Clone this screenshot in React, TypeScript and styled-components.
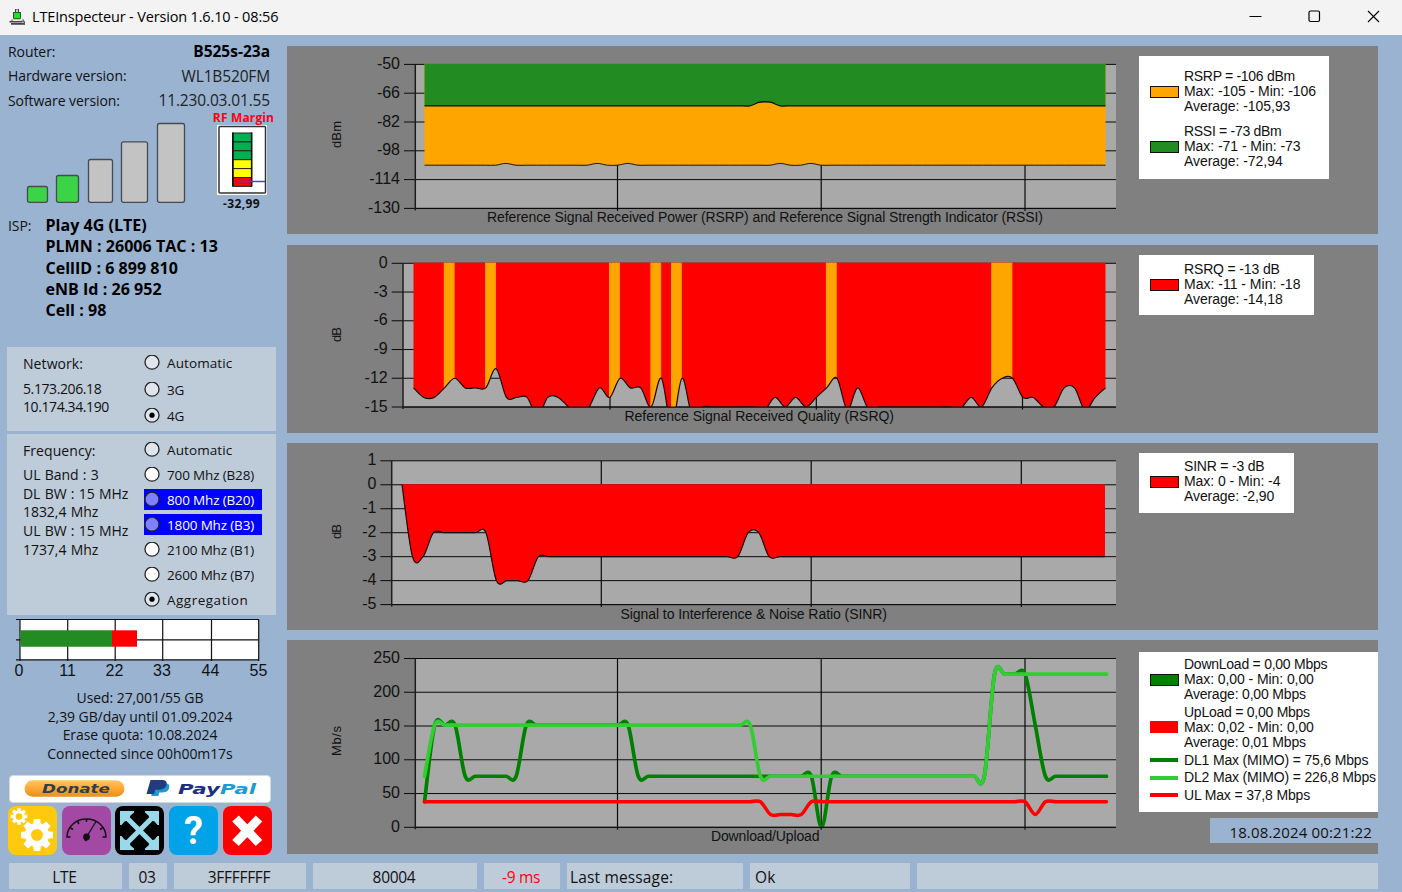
import { ReactNode } from "react";
import styled, { createGlobalStyle } from "styled-components";

const uiFont = `"Open Sans", "Noto Sans", sans-serif`;
const chartFont = `"Liberation Sans", Arial, sans-serif`;

const GlobalStyle = createGlobalStyle`
  body {
    margin: 0;
    background: #99b3d1;
    overflow: hidden;
  }
  svg {
    display: block;
    flex: none;
  }
`;

const Window = styled.div`
  width: 1402px;
  height: 892px;
  display: flex;
  flex-direction: column;
  background: #99b3d1;
  color: #111;
  font-family: ${uiFont};
  white-space: pre;
`;

const TitleBar = styled.header`
  height: 35px;
  flex: none;
  box-sizing: border-box;
  display: flex;
  align-items: center;
  padding: 0 22px 3px 9px;
  background: #f3f3f3;
  color: #000;
`;

const Title = styled.span`
  flex: 1;
  margin-left: 7px;
  font-size: 14.5px;
  letter-spacing: -0.16px;
`;

const WindowButtons = styled.div`
  display: flex;
  gap: 46px;
`;

const Main = styled.main`
  display: flex;
  height: 828px;
  flex: none;
`;

const Sidebar = styled.aside`
  width: 287px;
  flex: none;
  display: flex;
  flex-direction: column;
`;

const InfoList = styled.div`
  display: grid;
  grid-template-rows: 24px 25px 24px;
  align-items: center;
  padding: 4px 17px 0 8px;
`;

const InfoRow = styled.div`
  display: flex;
  justify-content: space-between;
  align-items: center;
`;

const InfoLabel = styled.span`
  font-size: 14px;
  letter-spacing: -0.07px;
`;

const InfoValue = styled.span<{ $bold?: boolean }>`
  font-size: 15.5px;
  font-weight: ${(p) => (p.$bold ? 700 : 400)};
  letter-spacing: ${(p) => (p.$bold ? 0 : -0.15)}px;
  color: ${(p) => (p.$bold ? "#000" : "#222")};
`;

const SignalRow = styled.div`
  height: 103px;
  display: flex;
`;

const MarginColumn = styled.div`
  display: flex;
  flex-direction: column;
  align-items: center;
  width: 64px;
  margin-left: 7.5px;
`;

const MarginTitle = styled.div`
  height: 13px;
  padding-left: 4px;
  line-height: 11px;
  font-size: 12px;
  font-weight: 700;
  letter-spacing: 0.15px;
  color: #ff0010;
`;

const MarginValue = styled.div`
  font-size: 12px;
  line-height: 18px;
  font-weight: 700;
  letter-spacing: 0.4px;
`;

const Isp = styled.div`
  display: flex;
  height: 132px;
  padding-left: 8px;
  line-height: 21.3px;
`;

const IspDetails = styled.div`
  margin-left: 14px;
  font-size: 16px;
  font-weight: 700;
  letter-spacing: 0.04px;
  color: #000;
`;

const Group = styled.section<{ $height: number }>`
  box-sizing: border-box;
  width: 269px;
  height: ${(p) => p.$height}px;
  margin: 0 0 3px 7px;
  padding-left: 16px;
  display: flex;
  background: #becbd9;
`;

const GroupInfo = styled.div<{ $wide?: boolean }>`
  width: 121px;
  padding-top: 8px;
  font-size: 14px;
  line-height: 18.7px;
  letter-spacing: ${(p) => (p.$wide ? -0.05 : -0.4)}px;
  word-spacing: ${(p) => (p.$wide ? 0.7 : 0)}px;
`;

const GroupTitle = styled.div<{ $gap?: number }>`
  margin-bottom: ${(p) => p.$gap ?? 6}px;
  letter-spacing: 0.08px;
`;

const Options = styled.div<{ $rowHeight: number }>`
  display: grid;
  grid-auto-rows: ${(p) => p.$rowHeight}px;
  align-content: start;
  align-items: center;
  padding-top: 3px;
`;

const Option = styled.div<{ $active?: boolean; $spacing?: number }>`
  display: flex;
  align-items: center;
  width: 118px;
  height: 21px;
  font-size: 13.5px;
  letter-spacing: ${(p) => p.$spacing ?? -0.15}px;
  color: ${(p) => (p.$active ? "#fff" : "#111")};
  background: ${(p) => (p.$active ? "#0000ff" : "transparent")};

  span {
    padding-left: 7px;
  }
`;

const Usage = styled.div`
  height: 86px;
  padding-right: 7px;
  margin-top: 6px;
  text-align: center;
  font-size: 14px;
  line-height: 18.7px;
  letter-spacing: -0.08px;
`;

const DonateButton = styled.div`
  box-sizing: border-box;
  width: 262px;
  height: 28px;
  margin: 0 0 3px 9px;
  border: 1px solid #d5d8de;
  border-radius: 4px;
  background: #fff;
`;

const Tools = styled.div`
  display: flex;
  gap: 4.7px;
  padding-left: 8px;
`;

const Tool = styled.div<{ $color: string }>`
  width: 49px;
  height: 49px;
  border-radius: 8px;
  background: ${(p) => p.$color};
`;

const Charts = styled.div`
  width: 1091px;
  display: flex;
  flex-direction: column;
  padding-top: 11px;
`;

const ChartPanel = styled.section<{ $height: number; $gap: number }>`
  height: ${(p) => p.$height}px;
  margin-bottom: ${(p) => p.$gap}px;
  flex: none;
  display: flex;
  background: #808080;
`;

const ChartSide = styled.div`
  flex: 1;
  display: flex;
  flex-direction: column;
  align-items: flex-start;
`;

const Legend = styled.div<{ $width: number; $height: number; $top: number; $pad: number }>`
  box-sizing: border-box;
  width: ${(p) => p.$width}px;
  height: ${(p) => p.$height}px;
  margin-top: ${(p) => p.$top}px;
  padding: ${(p) => p.$pad}px 0 0 11px;
  background: #fff;
`;

const LegendEntry = styled.div<{ $gap?: number }>`
  display: flex;
  align-items: center;
  margin-bottom: ${(p) => p.$gap ?? 0}px;
  font-family: ${chartFont};
  font-size: 14px;
  line-height: 15px;
`;

const Swatch = styled.div<{ $color: string; $height?: number; $border?: boolean }>`
  box-sizing: border-box;
  width: ${(p) => (p.$border ? 29 : 28)}px;
  height: ${(p) => p.$height ?? 12}px;
  margin-right: ${(p) => (p.$border ? 5 : 6)}px;
  border: ${(p) => (p.$border ? "1px solid #111" : "none")};
  background: ${(p) => p.$color};
`;

const LegendLine = styled.div<{ $spacing?: number }>`
  letter-spacing: ${(p) => p.$spacing ?? -0.3}px;
`;

const Clock = styled.div`
  align-self: flex-end;
  box-sizing: border-box;
  width: 168px;
  height: 25px;
  margin-top: 6px;
  padding-right: 6px;
  text-align: right;
  line-height: 28px;
  font-size: 15px;
  letter-spacing: 0.15px;
  background: #99b3d1;
`;

const StatusBar = styled.footer`
  display: flex;
  gap: 7px;
  padding-left: 9px;
`;

const StatusCell = styled.div<{ $width: number; $left?: number; $color?: string }>`
  box-sizing: border-box;
  width: ${(p) => p.$width}px;
  height: 26px;
  padding: ${(p) => (p.$left ? `0 0 0 ${p.$left}px` : "0 2px 0 0")};
  line-height: 28px;
  text-align: ${(p) => (p.$left ? "left" : "center")};
  font-size: 15.5px;
  letter-spacing: ${(p) => (p.$left ? 0.15 : -0.3)}px;
  color: ${(p) => p.$color ?? "#111"};
  background: #becbd9;
`;

type Point = [number, number];

// cardinal spline, tension 0.5
const spline = (pts: Point[]) =>
  pts.slice(1).reduce((d, p, i) => {
    const a = pts[i];
    const before = pts[i - 1] ?? a;
    const after = pts[i + 2] ?? p;
    const c1 = [a[0] + (p[0] - before[0]) / 6, a[1] + (p[1] - before[1]) / 6];
    const c2 = [p[0] - (after[0] - a[0]) / 6, p[1] - (after[1] - a[1]) / 6];
    return `${d}C${c1.join(" ")} ${c2.join(" ")} ${p.join(" ")}`;
  }, `M${pts[0].join(" ")}`);

const LAST = 67;

// expands [[index, value], ...] so that each value holds until the next index
const expand = (steps: Point[]) => {
  const out: number[] = [];
  steps.forEach(([from, value], i) => {
    const to = steps[i + 1]?.[0] ?? LAST + 1;
    for (let k = from; k < to; k++) out.push(value);
  });
  return out;
};

type Plot = {
  left: number;
  top: number;
  bottom: number;
  max: number;
  min: number;
  from: number;
  to: number;
};

const PLOT_RIGHT = 829;

const toPoints = (plot: Plot, values: number[]): Point[] =>
  values.map((v, i) => [
    plot.from + ((plot.to - plot.from) * i) / LAST,
    plot.top + ((plot.max - v) / (plot.max - plot.min)) * (plot.bottom - plot.top),
  ]);

type ChartProps = {
  id: string;
  height: number;
  plot: Plot;
  ticks: number[];
  columns: number[];
  unit: string;
  unitY: number;
  unitLength: number;
  caption: string;
  captionX: [number, number];
  captionY: number;
  children: ReactNode;
};

const Chart = (props: ChartProps) => {
  const { id, height, plot, ticks, columns, captionX, captionY } = props;
  const step = (plot.bottom - plot.top) / (ticks.length - 1);
  return (
    <svg width="852" height={height} fontFamily={chartFont} fill="#111">
      <defs>
        <clipPath id={id}>
          <rect
            x={plot.left}
            y={plot.top - 1}
            width={PLOT_RIGHT - plot.left}
            height={plot.bottom - plot.top + 1}
          />
        </clipPath>
      </defs>
      <rect
        x={plot.left}
        y={plot.top}
        width={PLOT_RIGHT - plot.left}
        height={plot.bottom - plot.top}
        fill="#a9a9a9"
      />
      {ticks.map((tick, i) => (
        <g key={tick}>
          <path d={`M${plot.left - 11} ${plot.top + i * step}H${PLOT_RIGHT}`} stroke="#0a0a0a" />
          <text x={plot.left - 15} y={plot.top + i * step + 4.6} fontSize="16" textAnchor="end">
            {tick}
          </text>
        </g>
      ))}
      {columns.map((x) => (
        <path key={x} d={`M${x} ${plot.top}V${plot.bottom + 2.5}`} stroke="#0a0a0a" strokeWidth="1.2" />
      ))}
      <g clipPath={`url(#${id})`}>{props.children}</g>
      <path d={`M${plot.left} ${plot.bottom}H${PLOT_RIGHT}`} stroke="#0a0a0a" />
      <path d={`M${plot.left + 0.3} ${plot.top}V${plot.bottom + 2}`} stroke="#1c1c1c" strokeWidth="1.5" />
      <text
        x={captionX[0]}
        y={captionY}
        fontSize="14"
        textLength={captionX[1] - captionX[0]}
      >
        {props.caption}
      </text>
      <text
        transform={`translate(54.4 ${props.unitY}) rotate(-90)`}
        fontSize="13"
        textLength={props.unitLength}
      >
        {props.unit}
      </text>
    </svg>
  );
};

const area = (pts: Point[], baseY: number) =>
  `${spline(pts)}L${pts[pts.length - 1][0]} ${baseY}L${pts[0][0]} ${baseY}Z`;

const powerPlot: Plot = { left: 128, top: 18.4, bottom: 162.4, max: -50, min: -130, from: 137.5, to: 818.5 };
const qualityPlot: Plot = { left: 115.7, top: 18.3, bottom: 162, max: 0, min: -15, from: 126.5, to: 818.5 };
const sinrPlot: Plot = { left: 104.4, top: 17.8, bottom: 161.6, max: 1, min: -5, from: 115, to: 818 };
const speedPlot: Plot = { left: 128, top: 18.5, bottom: 187.3, max: 250, min: 0, from: 137.5, to: 819.5 };

const rssi = toPoints(powerPlot, expand([[0, -73], [33, -71], [35, -73]]));
const rsrp = toPoints(
  powerPlot,
  expand([
    [0, -106], [8, -105], [9, -106], [17, -105], [18, -106], [20, -105],
    [21, -106], [35, -105], [36, -106], [38, -105], [39, -106],
  ])
);
const rsrq = toPoints(qualityPlot, [
  -13, -14, -14, -13, -12, -13, -13, -13, -11, -14, -14, -14, -16, -14, -14, -15, -16,
  -15, -13, -14, -12, -13, -13, -15, -12, -17, -12, -16, -15, -15, -15, -15, -15, -15,
  -15.3, -14, -15, -14, -15, -14, -13, -12, -15.3, -13, -15.1, -15, -15, -15, -15, -15, -15,
  -15, -15, -15.1, -14, -15, -13, -12, -12, -14, -14, -15, -15, -13, -13, -15.3, -14, -13,
]);
const goodRsrq = [[3, 4], [7, 8], [19, 20], [23, 24], [25, 26], [40, 41], [56, 58]];
const sinr = toPoints(
  sinrPlot,
  expand([[0, 0], [1, -3], [3, -2], [9, -4], [13, -3], [33, -2], [35, -3]])
);
const dl1 = toPoints(
  speedPlot,
  expand([
    [0, 37.8], [1, 151.2], [4, 75.6], [10, 151.2], [21, 75.6], [39, 0],
    [40, 75.6], [56, 226.8], [60, 151.2], [61, 75.6],
  ])
);
const dl2 = toPoints(speedPlot, expand([[0, 75.6], [1, 151.2], [33, 75.6], [56, 226.8]]));
const ul = toPoints(speedPlot, expand([[0, 37.8], [34, 18.9], [38, 37.8], [60, 18.9], [61, 37.8]]));

const PowerChart = () => (
  <Chart
    id="power"
    height={188}
    plot={powerPlot}
    ticks={[-50, -66, -82, -98, -114, -130]}
    columns={[330.5, 534.2, 738]}
    unit="dBm"
    unitY={102}
    unitLength={27}
    caption="Reference Signal Received Power (RSRP) and Reference Signal Strength Indicator (RSSI)"
    captionX={[200, 756]}
    captionY={176.4}
  >
    <path d={area(rsrp, 17.5)} fill="#ffa500" />
    <path d={spline(rsrp)} fill="none" stroke="#201400" />
    <path d={area(rssi, 17.5)} fill="#228b22" />
    <path d={spline(rssi)} fill="none" stroke="#051505" strokeWidth="1.3" />
  </Chart>
);

const QualityChart = () => (
  <Chart
    id="quality"
    height={188}
    plot={qualityPlot}
    ticks={[0, -3, -6, -9, -12, -15]}
    columns={[323, 529.3, 735.5]}
    unit="dB"
    unitY={97}
    unitLength={15}
    caption="Reference Signal Received Quality (RSRQ)"
    captionX={[337.5, 607]}
    captionY={176}
  >
    <clipPath id="qualityArea">
      <path d={area(rsrq, 17.5)} />
    </clipPath>
    <path d={area(rsrq, 17.5)} fill="#ff0000" />
    <g clipPath="url(#qualityArea)" fill="#ffa500">
      {goodRsrq.map(([a, b]) => (
        <rect key={a} x={rsrq[a][0] - 0.7} y="17" width={rsrq[b][0] - rsrq[a][0] + 0.5} height="150" />
      ))}
    </g>
    <path d={spline(rsrq)} fill="none" stroke="#1a0808" strokeWidth="1.2" />
  </Chart>
);

const SinrChart = () => (
  <Chart
    id="sinr"
    height={187}
    plot={sinrPlot}
    ticks={[1, 0, -1, -2, -3, -4, -5]}
    columns={[314.3, 524.2, 734.3]}
    unit="dB"
    unitY={96}
    unitLength={15}
    caption="Signal to Interference & Noise Ratio (SINR)"
    captionX={[333.5, 600]}
    captionY={176}
  >
    <path d={area(sinr, sinr[0][1] - 0.5)} fill="#ff0000" />
    <path d={spline(sinr)} fill="none" stroke="#1a0505" strokeWidth="1.2" />
  </Chart>
);

const SpeedChart = () => (
  <Chart
    id="speed"
    height={214}
    plot={speedPlot}
    ticks={[250, 200, 150, 100, 50, 0]}
    columns={[330.5, 534.2, 738]}
    unit="Mb/s"
    unitY={116}
    unitLength={30}
    caption="Download/Upload"
    captionX={[424, 532.5]}
    captionY={201.4}
  >
    <g fill="none" strokeWidth="3.7" strokeLinecap="round">
      <path d={spline(dl1)} stroke="#008000" />
      <path d={spline(dl2)} stroke="#32cd32" />
      <path d={spline(ul)} stroke="#ff0000" strokeWidth="3.5" />
    </g>
  </Chart>
);

const AppIcon = () => (
  <svg width="16" height="17" viewBox="0 0 16 17">
    <path d="M6 1h4v3h2v7H4V4h2z" fill="#444" />
    <path d="M7 1.5h2V4H7z" fill="#ccc" />
    <path d="M5 5h6v5.2H5z" fill="#17e817" />
    <path d="M3 11h10l2.5 3H.5z" fill="#999" />
    <path d="M2.8 10.5h1.7v1h7v-1H13l.5 1.5-2 1h-7z" fill="#eee" />
    <path d="M.5 13h13v1.5H.5zM2 15h14v1.8H2z" fill="#444" />
    <path d="M13.5 10l2.5 4v2.5h-1.5V14z" fill="#555" />
  </svg>
);

const SignalBars = () => {
  const bars = [
    [27.5, 186.5, 20, true], [56.5, 175.5, 22, true], [88.5, 159.5, 24, false],
    [121.5, 141.8, 26, false], [157.5, 123.5, 27, false],
  ] as [number, number, number, boolean][];
  return (
    <svg width="202" height="102" stroke="#454b52" strokeWidth="1.3">
      {bars.map(([x, y, width, on]) => (
        <rect
          key={x}
          x={x}
          y={y - 112}
          width={width}
          height={202.3 - y}
          rx="2"
          fill={on ? "#3ad446" : "#c3c3c3"}
        />
      ))}
    </svg>
  );
};

const RfMargin = () => (
  <svg width="50" height="70">
    <rect width="50" height="70" fill="#fff" />
    <rect x="2" y="1.5" width="46.5" height="66.5" rx="1" fill="#fff" stroke="#333" strokeWidth="1.5" />
    {["#00b050", "#00b050", "#00b050", "#ffff00", "#ffff00", "#ff0000"].map((color, i) => (
      <rect key={i} x="16" y={8 + i * 8.9} width="18.5" height="8.9" fill={color} stroke="#222" />
    ))}
    <path d="M15.8 7.5v54M34.7 7.5v54" stroke="#111" strokeWidth="1.6" />
    <path d="M21 56.5H48" stroke="#3f48cc" strokeWidth="1.5" />
  </svg>
);

const Radio = ({ fill = "#dfe6ed", dot = false }: { fill?: string; dot?: boolean }) => (
  <svg width="16" height="16">
    <circle cx="8" cy="7.2" r="7" fill={fill} stroke="#222" strokeWidth="1.3" />
    {dot && <circle cx="8" cy="7.2" r="2.6" fill="#000" />}
  </svg>
);

const QuotaGauge = () => (
  <svg width="287" height="65" stroke="#111" strokeWidth="1.2">
    <rect x="20" y="1.5" width="238.5" height="40.3" fill="#fff" stroke="none" />
    <path d="M16 1.5H259M16 21.8H259M16 41.8H259" />
    <path d="M20 1.5V43M67.7 1.5V43M115.2 1.5V43M162.7 1.5V43M211.5 1.5V43M258.7 1.5V43" />
    <path d="M20.5 12.3H112v16.4H20.5z" fill="#228b22" stroke="none" />
    <path d="M112 12.3H137v16.4H112z" fill="#ff0000" stroke="none" />
    <g fontFamily={chartFont} fontSize="16" fill="#111" stroke="none" textAnchor="middle">
      {[0, 11, 22, 33, 44, 55].map((n, i) => (
        <text key={n} x={[19, 67.5, 114.5, 162, 210.5, 258.5][i]} y="58.3">
          {n}
        </text>
      ))}
    </g>
  </svg>
);

const PayPal = () => (
  <svg width="260" height="26">
    <defs>
      <linearGradient id="pill" x2="0" y2="1">
        <stop offset="0" stopColor="#ffc668" />
        <stop offset="0.5" stopColor="#ffa832" />
        <stop offset="1" stopColor="#e88f1c" />
      </linearGradient>
    </defs>
    <rect x="14.5" y="4.3" width="100" height="16.4" rx="8.2" fill="url(#pill)" />
    <g fontFamily="'DejaVu Sans', sans-serif" fontWeight="700" fontStyle="italic">
      <text x="32" y="17" fontSize="12.5" fill="#2c3e50" textLength="68" lengthAdjust="spacingAndGlyphs">
        Donate
      </text>
      <text x="168" y="17.5" fontSize="13.5" fill="#1d2f82" textLength="42" lengthAdjust="spacingAndGlyphs">
        Pay
      </text>
      <text x="210" y="17.5" fontSize="13.5" fill="#1d9bd9" textLength="36" lengthAdjust="spacingAndGlyphs">
        Pal
      </text>
    </g>
    <path d="M143 7.5h13c3.5 0 4 3 2.8 5.5-1.3 2.8-3.5 3.5-7 3.5h-2.5l-1 3.500h-7z" fill="#199bd7" />
    <path d="M140.5 4H152c4.5 0 5.5 2.5 4.3 5.5-1.3 3.3-4 4.2-8 4.200h-3l-1.2 4.300h-7.600z" fill="#253b80" />
  </svg>
);

const gearPath = (cx: number, cy: number, outer: number, inner: number, hole: number) => {
  const pts: string[] = [];
  for (let i = 0; i < 8; i++) {
    const a = (i * Math.PI) / 4;
    [[-0.3, inner], [-0.2, outer], [0.2, outer], [0.3, inner]].forEach(([da, r]) => {
      pts.push(`${cx + r * Math.sin(a + da)} ${cy - r * Math.cos(a + da)}`);
    });
  }
  return `M${pts.join("L")}ZM${cx - hole} ${cy}a${hole} ${hole} 0 1 0 ${hole * 2} 0a${hole} ${hole} 0 1 0 ${-hole * 2} 0Z`;
};

const SettingsIcon = () => (
  <svg width="49" height="49" fill="#fff" fillRule="evenodd">
    <path d={gearPath(11, 10.5, 8.5, 6, 3.3)} />
    <path d={gearPath(29, 29, 16.3, 12.2, 6)} />
  </svg>
);

const SpeedIcon = () => (
  <svg width="49" height="49" fill="none" stroke="#111" strokeWidth="1.5">
    <path d="M8.5 31H5a19.5 18 0 0 1 39 0h-3.5" />
    <path d="M8.5 22l2.5 1.5M15.5 15.5l1.5 2.5M24.5 13v3M40.5 22L38 23.5" />
    <path d="M24.5 31L34 15.5" strokeWidth="1.3" />
    <path d="M23.5 35l2-7" strokeWidth="2" />
    <circle cx="24.5" cy="31" r="3.4" fill="#111" stroke="none" />
  </svg>
);

const ExpandIcon = () => (
  <svg width="49" height="49" fill="#99d9ea">
    <path d="M9 9l31 31M40 9L9 40" stroke="#99d9ea" strokeWidth="5.2" />
    {[0, 90, 180, 270].map((angle) => (
      <path
        key={angle}
        transform={`rotate(${angle} 24.5 24.5)`}
        d="M5 5h14v1.5L15.500 9.500 14 14 9.500 15.500 6.500 19H5z"
      />
    ))}
  </svg>
);

const HelpIcon = () => (
  <svg width="49" height="49">
    <text x="24.5" y="38" textAnchor="middle" fontFamily="Roboto, sans-serif" fontSize="38" fontWeight="700" fill="#fff">
      ?
    </text>
  </svg>
);

const QuitIcon = () => (
  <svg width="49" height="49">
    <path d="M12.5 12.5L36 37M36 12.5L12.5 37" stroke="#fff" strokeWidth="9" />
  </svg>
);

const bands = [
  { label: "Automatic", spacing: 0.1 },
  { label: "700 Mhz (B28)", fill: "#fff" },
  { label: "800 Mhz (B20)", fill: "#8080ff", active: true },
  { label: "1800 Mhz (B3)", fill: "#8080ff", active: true },
  { label: "2100 Mhz (B1)", fill: "#fff" },
  { label: "2600 Mhz (B7)", fill: "#fff" },
  { label: "Aggregation", dot: true, spacing: 0.5 },
];

const App = () => {
  return (
    <Window>
      <GlobalStyle />
      <TitleBar>
        <AppIcon />
        <Title>LTEInspecteur - Version 1.6.10 - 08:56</Title>
        <WindowButtons>
          <svg width="13" height="13" stroke="#000">
            <path d="M0.5 6.5h12" />
          </svg>
          <svg width="13" height="13" stroke="#000" fill="none">
            <rect x="1" y="1" width="10.5" height="10.5" rx="1.5" strokeWidth="1.2" />
          </svg>
          <svg width="13" height="13" stroke="#000">
            <path d="M1 1l11 11M12 1L1 12" strokeWidth="1.1" />
          </svg>
        </WindowButtons>
      </TitleBar>
      <Main>
        <Sidebar>
          <InfoList>
            <InfoRow>
              <InfoLabel>Router:</InfoLabel>
              <InfoValue $bold>B525s-23a</InfoValue>
            </InfoRow>
            <InfoRow>
              <InfoLabel>Hardware version:</InfoLabel>
              <InfoValue>WL1B520FM</InfoValue>
            </InfoRow>
            <InfoRow>
              <InfoLabel>Software version:</InfoLabel>
              <InfoValue>11.230.03.01.55</InfoValue>
            </InfoRow>
          </InfoList>
          <SignalRow>
            <SignalBars />
            <MarginColumn>
              <MarginTitle>RF Margin</MarginTitle>
              <RfMargin />
              <MarginValue>-32,99</MarginValue>
            </MarginColumn>
          </SignalRow>
          <Isp>
            <InfoLabel>ISP:</InfoLabel>
            <IspDetails>
              <div>Play 4G (LTE)</div>
              <div>PLMN : 26006 TAC : 13</div>
              <div>CellID : 6 899 810</div>
              <div>eNB Id : 26 952</div>
              <div>Cell : 98</div>
            </IspDetails>
          </Isp>
          <Group $height={84}>
            <GroupInfo>
              <GroupTitle>Network:</GroupTitle>
              <div>5.173.206.18</div>
              <div>10.174.34.190</div>
            </GroupInfo>
            <Options $rowHeight={26.5}>
              <Option $spacing={0.1}>
                <Radio />
                <span>Automatic</span>
              </Option>
              <Option>
                <Radio />
                <span>3G</span>
              </Option>
              <Option>
                <Radio dot />
                <span>4G</span>
              </Option>
            </Options>
          </Group>
          <Group $height={181}>
            <GroupInfo $wide>
              <GroupTitle $gap={5.2}>Frequency:</GroupTitle>
              <div>UL Band : 3</div>
              <div>DL BW : 15 MHz</div>
              <div>1832,4 Mhz</div>
              <div>UL BW : 15 MHz</div>
              <div>1737,4 Mhz</div>
            </GroupInfo>
            <Options $rowHeight={25}>
              {bands.map((band) => (
                <Option key={band.label} $active={band.active} $spacing={band.spacing}>
                  <Radio fill={band.fill} dot={band.dot} />
                  <span>{band.label}</span>
                </Option>
              ))}
            </Options>
          </Group>
          <QuotaGauge />
          <Usage>
            <div>Used: 27,001/55 GB</div>
            <div>2,39 GB/day until 01.09.2024</div>
            <div>Erase quota: 10.08.2024</div>
            <div>Connected since 00h00m17s</div>
          </Usage>
          <DonateButton>
            <PayPal />
          </DonateButton>
          <Tools>
            <Tool $color="#ffc90e">
              <SettingsIcon />
            </Tool>
            <Tool $color="#a349a4">
              <SpeedIcon />
            </Tool>
            <Tool $color="#000">
              <ExpandIcon />
            </Tool>
            <Tool $color="#00a2e8">
              <HelpIcon />
            </Tool>
            <Tool $color="#ff0000">
              <QuitIcon />
            </Tool>
          </Tools>
        </Sidebar>
        <Charts>
          <ChartPanel $height={188} $gap={11}>
            <PowerChart />
            <ChartSide>
              <Legend $width={190} $height={123} $top={10} $pad={13}>
                <LegendEntry $gap={10}>
                  <Swatch $color="#ffa500" $border />
                  <div>
                    <LegendLine>RSRP = -106 dBm</LegendLine>
                    <LegendLine $spacing={-0.05}>Max: -105 - Min: -106</LegendLine>
                    <LegendLine $spacing={-0.05}>Average: -105,93</LegendLine>
                  </div>
                </LegendEntry>
                <LegendEntry>
                  <Swatch $color="#228b22" $border />
                  <div>
                    <LegendLine>RSSI = -73 dBm</LegendLine>
                    <LegendLine $spacing={-0.05}>Max: -71 - Min: -73</LegendLine>
                    <LegendLine $spacing={-0.05}>Average: -72,94</LegendLine>
                  </div>
                </LegendEntry>
              </Legend>
            </ChartSide>
          </ChartPanel>
          <ChartPanel $height={188} $gap={10}>
            <QualityChart />
            <ChartSide>
              <Legend $width={175} $height={60} $top={10} $pad={7}>
                <LegendEntry>
                  <Swatch $color="#ff0000" $border />
                  <div>
                    <LegendLine $spacing={-0.15}>RSRQ = -13 dB</LegendLine>
                    <LegendLine $spacing={0}>Max: -11 - Min: -18</LegendLine>
                    <LegendLine $spacing={-0.05}>Average: -14,18</LegendLine>
                  </div>
                </LegendEntry>
              </Legend>
            </ChartSide>
          </ChartPanel>
          <ChartPanel $height={187} $gap={10}>
            <SinrChart />
            <ChartSide>
              <Legend $width={155} $height={60} $top={10} $pad={6}>
                <LegendEntry>
                  <Swatch $color="#ff0000" $border />
                  <div>
                    <LegendLine $spacing={-0.2}>SINR = -3 dB</LegendLine>
                    <LegendLine $spacing={-0.05}>Max: 0 - Min: -4</LegendLine>
                    <LegendLine $spacing={-0.1}>Average: -2,90</LegendLine>
                  </div>
                </LegendEntry>
              </Legend>
            </ChartSide>
          </ChartPanel>
          <ChartPanel $height={214} $gap={0}>
            <SpeedChart />
            <ChartSide>
              <Legend $width={239} $height={160} $top={12} $pad={5}>
                <LegendEntry $gap={2.5}>
                  <Swatch $color="#008000" $border />
                  <div>
                    <LegendLine $spacing={-0.25}>DownLoad = 0,00 Mbps</LegendLine>
                    <LegendLine $spacing={-0.08}>Max: 0,00 - Min: 0,00</LegendLine>
                    <LegendLine $spacing={-0.18}>Average: 0,00 Mbps</LegendLine>
                  </div>
                </LegendEntry>
                <LegendEntry $gap={3}>
                  <Swatch $color="#ff0000" />
                  <div>
                    <LegendLine $spacing={-0.25}>UpLoad = 0,00 Mbps</LegendLine>
                    <LegendLine $spacing={-0.08}>Max: 0,02 - Min: 0,00</LegendLine>
                    <LegendLine $spacing={-0.18}>Average: 0,01 Mbps</LegendLine>
                  </div>
                </LegendEntry>
                <LegendEntry $gap={2.5}>
                  <Swatch $color="#008000" $height={4} />
                  <LegendLine $spacing={-0.17}>DL1 Max (MIMO) = 75,6 Mbps</LegendLine>
                </LegendEntry>
                <LegendEntry $gap={2.5}>
                  <Swatch $color="#32cd32" $height={4} />
                  <LegendLine $spacing={-0.17}>DL2 Max (MIMO) = 226,8 Mbps</LegendLine>
                </LegendEntry>
                <LegendEntry>
                  <Swatch $color="#ff0000" $height={4} />
                  <LegendLine $spacing={-0.17}>UL Max = 37,8 Mbps</LegendLine>
                </LegendEntry>
              </Legend>
              <Clock>18.08.2024 00:21:22</Clock>
            </ChartSide>
          </ChartPanel>
        </Charts>
      </Main>
      <StatusBar>
        <StatusCell $width={113}>LTE</StatusCell>
        <StatusCell $width={38}>03</StatusCell>
        <StatusCell $width={132}>3FFFFFFF</StatusCell>
        <StatusCell $width={164}>80004</StatusCell>
        <StatusCell $width={76} $color="#ff0010">
          -9 ms
        </StatusCell>
        <StatusCell $width={176} $left={3}>
          Last message:
        </StatusCell>
        <StatusCell $width={160} $left={5}>
          Ok
        </StatusCell>
        <StatusCell $width={461} />
      </StatusBar>
    </Window>
  );
};

export default App;
